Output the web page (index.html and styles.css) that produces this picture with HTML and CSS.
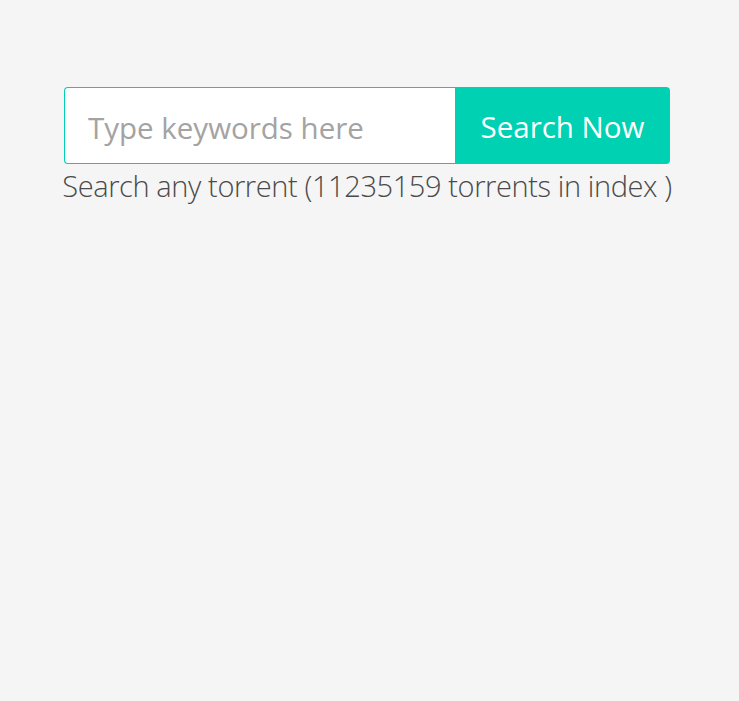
FILE: index.html
```html
<!DOCTYPE html>
<html>
<head>
<meta charset="utf-8">
<link rel="stylesheet" href="styles.css">
</head>
<body>
<main class="page">
  <form class="search">
    <div class="field">
      <input class="input" type="text" placeholder="Type keywords here">
      <button class="button" type="button">Search Now</button>
    </div>
    <p class="subtitle">Search any torrent (11235159 torrents in index )</p>
  </form>
</main>
</body>
</html>
```

FILE: styles.css
```css
html, body {
  margin: 0;
  padding: 0;
  background: #f5f5f5;
  font-family: "Open Sans", "Noto Sans", sans-serif;
}
.page {
  width: 739px;
  height: 701px;
  padding: 87px 0 0 64px;
  box-sizing: border-box;
}
.search {
  width: 606px;
  margin: 0;
  display: flex;
  flex-direction: column;
  align-items: center;
}
.field {
  display: flex;
  width: 606px;
  height: 77px;
}
.input {
  flex: 1 1 auto;
  min-width: 0;
  width: 391px;
  box-sizing: border-box;
  height: 77px;
  border: 1px solid #00d1b2;
  border-right: none;
  border-radius: 4px 0 0 4px;
  background: #fff;
  padding: 3px 0 0 23px;
  font-family: inherit;
  font-size: 29.5px;
  color: #363636;
  outline: none;
}
.input::placeholder {
  color: #a3a3a3;
  font-weight: 400;
}
.button {
  flex: none;
  box-sizing: border-box;
  width: 215px;
  height: 77px;
  border: none;
  border-radius: 0 4px 4px 0;
  background: #00d1b2;
  color: #fff;
  font-family: inherit;
  font-size: 29.5px;
  padding: 2px 0 0;
}
.subtitle {
  margin: 3px 0 0;
  font-size: 29px;
  font-weight: 300;
  letter-spacing: -0.4px;
  color: #4a4a4a;
  line-height: 38px;
  white-space: nowrap;
}
```
